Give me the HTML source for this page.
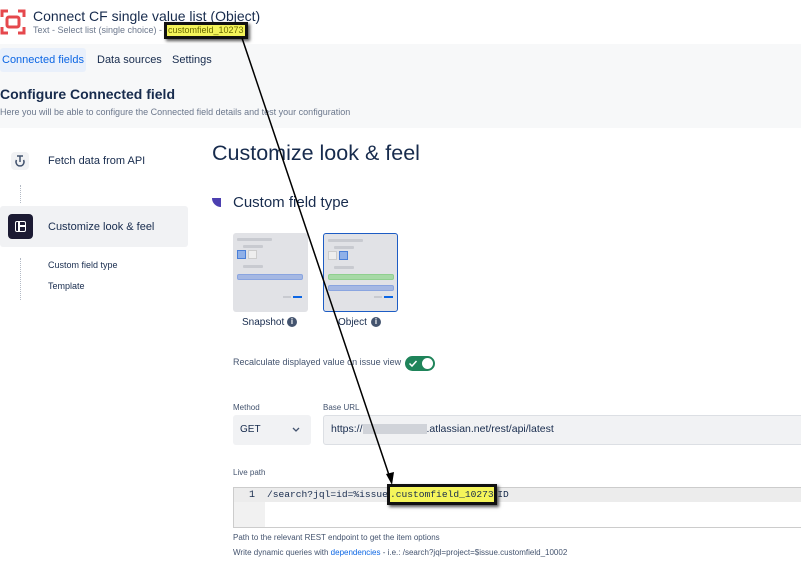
<!DOCTYPE html>
<html><head><meta charset="utf-8"><style>
*{margin:0;padding:0;box-sizing:border-box}
body{width:801px;height:578px;overflow:hidden;background:#fff;font-family:"Liberation Sans",sans-serif;color:#172b4d;position:relative}
.a{position:absolute;white-space:nowrap}
.band{position:absolute;left:0;top:44px;width:801px;height:84px;background:#f7f8f9}
.hl{background:#f5f55a;border:3px solid #111;box-shadow:2px 2px 3px #555}
.card{position:absolute;width:75px;height:79px;background:#e1e2e6;border-radius:3px}
.bar{position:absolute;height:3px;background:#c8cad0;border-radius:1px}
</style></head><body>
<svg class="a" style="left:0;top:9px" width="26" height="26" viewBox="0 0 26 26">
<g fill="none" stroke="#e5484d" stroke-width="3"><path d="M2 8V2h6M18 2h6v6M24 18v6h-6M8 24H2v-6"/></g>
<rect x="7" y="8" width="12" height="10" rx="2" fill="none" stroke="#e5484d" stroke-width="3"/>
</svg>
<div class="a" style="left:33px;top:8px;font-size:14px;color:#172b4d">Connect CF single value list (Object)</div>
<div class="a" style="left:33px;top:25px;font-size:9px;color:#6b778c">Text - Select list (single choice) - </div>
<div class="a hl" style="left:164px;top:22px;width:84px;height:17px;font-size:9px;line-height:11px;padding-left:1px;color:#6b6b00">customfield_10273</div>
<div class="band"></div>
<div class="a" style="left:0;top:48px;width:86px;height:24px;background:#e9f0fb;border-radius:3px"></div>
<div class="a" style="left:2px;top:54px;font-size:11px;color:#0c66e4">Connected fields</div>
<div class="a" style="left:97px;top:54px;font-size:11px;color:#172b4d">Data sources</div>
<div class="a" style="left:172px;top:54px;font-size:11px;color:#172b4d">Settings</div>
<div class="a" style="left:0;top:86px;font-size:14px;font-weight:bold;color:#172b4d">Configure Connected field</div>
<div class="a" style="left:0;top:107px;font-size:9px;color:#6b778c">Here you will be able to configure the Connected field details and test your configuration</div>

<div class="a" style="left:11px;top:152px;width:18px;height:18px;background:#f1f2f4;border-radius:4px"></div>
<svg class="a" style="left:11px;top:152px" width="18" height="18" viewBox="0 0 18 18"><g fill="none" stroke="#44546f" stroke-width="1.5"><path d="M6 4h6M9 4v6"/><path d="M5.5 8a4 4 0 1 0 7 0"/></g></svg>
<div class="a" style="left:48px;top:155px;font-size:11px">Fetch data from API</div>
<div class="a" style="left:20px;top:185px;height:18px;border-left:1px dotted #b3bac5"></div>
<div class="a" style="left:0;top:206px;width:188px;height:41px;background:#f1f2f4;border-radius:3px"></div>
<div class="a" style="left:8px;top:214px;width:25px;height:25px;background:#1c1b33;border-radius:4px"></div>
<div class="a" style="left:15px;top:221px;width:11px;height:11px;border:1.5px solid #fff;border-radius:2px"></div>
<div class="a" style="left:18px;top:221px;width:1.5px;height:11px;background:#fff"></div>
<div class="a" style="left:18px;top:225px;width:8px;height:1.5px;background:#fff"></div>
<div class="a" style="left:48px;top:221px;font-size:11px">Customize look &amp; feel</div>
<div class="a" style="left:20px;top:258px;height:42px;border-left:1px dotted #b3bac5"></div>
<div class="a" style="left:48px;top:260px;font-size:9px">Custom field type</div>
<div class="a" style="left:48px;top:281px;font-size:9px">Template</div>

<div class="a" style="left:212px;top:141px;font-size:21.5px;color:#172b4d">Customize look &amp; feel</div>
<div class="a" style="left:212px;top:198px;width:9px;height:9px;background:#4c3fb0;border-radius:0 0 0 9px"></div>
<div class="a" style="left:233px;top:194px;font-size:15px">Custom field type</div>

<div class="card" style="left:233px;top:233px">
<div class="bar" style="left:4px;top:5px;width:35px"></div>
<div class="bar" style="left:10px;top:12px;width:20px"></div>
<div class="a" style="left:4px;top:17px;width:9px;height:9px;background:#8fb0e8;border:1px solid #4a7fd8"></div>
<div class="a" style="left:15px;top:17px;width:9px;height:9px;background:#eee;border:1px solid #ccc"></div>
<div class="bar" style="left:10px;top:32px;width:20px"></div>
<div class="a" style="left:4px;top:41px;width:66px;height:6px;background:#a5b8e3;border:1px solid #8aa5e0;border-radius:2px"></div>
<div class="a" style="left:50px;top:63px;width:8px;height:2px;background:#c8cad0"></div>
<div class="a" style="left:60px;top:63px;width:9px;height:2px;background:#0c66e4"></div>
</div>
<div class="card" style="left:323px;top:233px;border:1px solid #1d5cc4">
<div class="bar" style="left:4px;top:5px;width:35px"></div>
<div class="bar" style="left:10px;top:12px;width:20px"></div>
<div class="a" style="left:4px;top:17px;width:9px;height:9px;background:#eee;border:1px solid #ccc"></div>
<div class="a" style="left:15px;top:17px;width:9px;height:9px;background:#8fb0e8;border:1px solid #4a7fd8"></div>
<div class="bar" style="left:10px;top:32px;width:20px"></div>
<div class="a" style="left:4px;top:40px;width:66px;height:6px;background:#a6d9a6;border:1px solid #8fcf8f;border-radius:2px"></div>
<div class="a" style="left:4px;top:51px;width:66px;height:6px;background:#a5b8e3;border:1px solid #8aa5e0;border-radius:2px"></div>
<div class="a" style="left:50px;top:62px;width:8px;height:2px;background:#c8cad0"></div>
<div class="a" style="left:60px;top:62px;width:9px;height:2px;background:#0c66e4"></div>
</div>
<div class="a" style="left:242px;top:317px;font-size:10px">Snapshot</div>
<div class="a" style="left:287px;top:317px;width:10px;height:10px;border-radius:50%;background:#44546f;color:#fff;font-size:8px;text-align:center;line-height:10px;font-weight:bold">i</div>
<div class="a" style="left:338px;top:317px;font-size:10px">Object</div>
<div class="a" style="left:371px;top:317px;width:10px;height:10px;border-radius:50%;background:#44546f;color:#fff;font-size:8px;text-align:center;line-height:10px;font-weight:bold">i</div>

<div class="a" style="left:233px;top:357px;font-size:9px;color:#44546f">Recalculate displayed value on issue view</div>
<div class="a" style="left:405px;top:356px;width:30px;height:15px;background:#1f845a;border-radius:8px"></div>
<div class="a" style="left:422px;top:358px;width:11px;height:11px;background:#fff;border-radius:50%"></div>
<svg class="a" style="left:408px;top:359px" width="10" height="9"><path d="M1.5 4.5l2.5 2.5 4.5-5" stroke="#fff" stroke-width="1.5" fill="none"/></svg>

<div class="a" style="left:233px;top:403px;font-size:8px;color:#44546f">Method</div>
<div class="a" style="left:323px;top:403px;font-size:8px;color:#44546f">Base URL</div>
<div class="a" style="left:233px;top:415px;width:78px;height:30px;background:#f1f2f4;border-radius:3px"></div>
<div class="a" style="left:240px;top:424px;font-size:10px">GET</div>
<svg class="a" style="left:292px;top:427px" width="8" height="6"><path d="M1 1l3 3 3-3" stroke="#44546f" stroke-width="1.3" fill="none"/></svg>
<div class="a" style="left:323px;top:415px;width:490px;height:30px;background:#f1f2f4;border:1px solid #dcdfe4;border-radius:3px"></div>
<div class="a" style="left:331px;top:423px;font-size:10.5px;color:#172b4d">https://<span style="display:inline-block;width:64px;height:10px;background:#d0d3d9;vertical-align:middle"></span>.atlassian.net/rest/api/latest</div>

<div class="a" style="left:233px;top:468px;font-size:8px;color:#44546f">Live path</div>
<div class="a" style="left:233px;top:487px;width:580px;height:41px;border:1px solid #ccc;background:#fff"></div>
<div class="a" style="left:234px;top:488px;width:31px;height:39px;background:#f1f1f1"></div>
<div class="a" style="left:234px;top:488px;width:570px;height:14px;background:#ececec"></div>
<div class="a" style="left:249px;top:490px;font-size:10px;font-family:'Liberation Mono',monospace">1</div>
<div class="a" style="left:267px;top:489px;font-size:9.6px;font-family:'Liberation Mono',monospace">/search?jql=id=%issue.customfield_10273.ID</div>
<div class="a hl" style="left:387px;top:484px;width:110px;height:21px;font-size:9.6px;line-height:15px;font-family:'Liberation Mono',monospace;padding-left:0">.customfield_10273</div>
<div class="a" style="left:233px;top:533px;font-size:8px;color:#44546f">Path to the relevant REST endpoint to get the item options</div>
<div class="a" style="left:233px;top:548px;font-size:8px;color:#44546f">Write dynamic queries with <span style="color:#0c66e4">dependencies</span> - i.e.: /search?jql=project=$issue.customfield_10002</div>

<svg class="a" style="left:0;top:0" width="801" height="578"><line x1="242" y1="38" x2="390" y2="478" stroke="#000" stroke-width="1.5"/><path d="M386 474 L392 485 L394 472 Z" fill="#000"/></svg>
</body></html>
